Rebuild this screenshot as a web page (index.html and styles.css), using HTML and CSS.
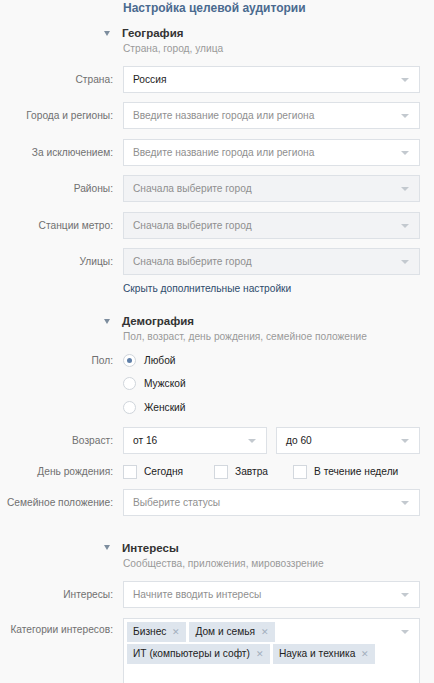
FILE: index.html
```html
<!DOCTYPE html>
<html lang="ru">
<head>
<meta charset="utf-8">
<link rel="stylesheet" href="styles.css">
</head>
<body>
<div class="page">
  <div class="title">Настройка целевой аудитории</div>

  <div class="section-head"><span class="tri"></span><span class="h">География</span></div>
  <div class="sub">Страна, город, улица</div>

  <div class="form">
    <div class="row"><div class="lbl">Страна:</div><div class="sel"><span class="val">Россия</span><span class="arr"></span></div></div>
    <div class="row"><div class="lbl">Города и регионы:</div><div class="sel"><span class="ph">Введите название города или региона</span><span class="arr"></span></div></div>
    <div class="row"><div class="lbl">За исключением:</div><div class="sel"><span class="ph">Введите название города или региона</span><span class="arr"></span></div></div>
    <div class="row"><div class="lbl">Районы:</div><div class="sel dis"><span class="ph">Сначала выберите город</span><span class="arr"></span></div></div>
    <div class="row"><div class="lbl">Станции метро:</div><div class="sel dis"><span class="ph">Сначала выберите город</span><span class="arr"></span></div></div>
    <div class="row"><div class="lbl">Улицы:</div><div class="sel dis"><span class="ph">Сначала выберите город</span><span class="arr"></span></div></div>
  </div>
  <div class="link">Скрыть дополнительные настройки</div>

  <div class="section-head s2"><span class="tri"></span><span class="h">Демография</span></div>
  <div class="sub">Пол, возраст, день рождения, семейное положение</div>

  <div class="radios">
    <div class="rrow"><div class="lbl">Пол:</div><span class="radio on"></span><span class="rt">Любой</span></div>
    <div class="rrow"><div class="lbl"></div><span class="radio"></span><span class="rt">Мужской</span></div>
    <div class="rrow"><div class="lbl"></div><span class="radio"></span><span class="rt">Женский</span></div>
  </div>

  <div class="row age"><div class="lbl">Возраст:</div>
    <div class="pair">
      <div class="sel"><span class="val">от 16</span><span class="arr"></span></div>
      <div class="sel"><span class="val">до 60</span><span class="arr"></span></div>
    </div>
  </div>
  <div class="crow"><div class="lbl">День рождения:</div>
    <div class="checks">
      <span class="chk c1"><span class="cb"></span><span class="ct">Сегодня</span></span>
      <span class="chk c2"><span class="cb"></span><span class="ct">Завтра</span></span>
      <span class="chk"><span class="cb"></span><span class="ct">В течение недели</span></span>
    </div>
  </div>
  <div class="row fam"><div class="lbl">Семейное положение:</div><div class="sel"><span class="ph">Выберите статусы</span><span class="arr"></span></div></div>

  <div class="section-head s3"><span class="tri"></span><span class="h">Интересы</span></div>
  <div class="sub">Сообщества, приложения, мировоззрение</div>

  <div class="row int"><div class="lbl">Интересы:</div><div class="sel"><span class="ph">Начните вводить интересы</span><span class="arr"></span></div></div>
  <div class="row cat"><div class="lbl">Категории интересов:</div>
    <div class="tagbox">
      <div class="tags">
        <span class="tag">Бизнес<span class="x">✕</span></span>
        <span class="tag">Дом и семья<span class="x">✕</span></span>
        <span class="tag">ИТ (компьютеры и софт)<span class="x">✕</span></span>
        <span class="tag">Наука и техника<span class="x">✕</span></span>
      </div>
      <span class="arr"></span>
    </div>
  </div>
</div>
</body>
</html>
```
FILE: styles.css
```css
html, body {
  margin: 0;
  padding: 0;
  background: #f9f9f9;
}
body {
  font-family: "Liberation Sans", Arial, sans-serif;
  font-size: 10.2px;
  color: #222;
}
.page {
  width: 434px;
  height: 683px;
  overflow: hidden;
}
.title {
  margin-left: 123px;
  height: 16px;
  line-height: 16px;
  font-size: 12px;
  font-weight: bold;
  color: #4a6a8f;
}
.section-head {
  display: flex;
  align-items: center;
  margin-top: 9px;
  height: 16px;
}
.section-head.s2 { margin-top: 17.5px; }
.section-head.s3 { margin-top: 24px; }
.tri {
  margin-left: 104px;
  width: 0;
  height: 0;
  border-left: 3px solid transparent;
  border-right: 3px solid transparent;
  border-top: 5px solid #7d8d9e;
}
.h {
  margin-left: 12px;
  font-size: 11.5px;
  font-weight: bold;
  color: #333;
}
.sub {
  margin-left: 123px;
  height: 14px;
  line-height: 14px;
  margin-top: 1px;
  color: #9a9a9a;
}
.form {
  margin-top: 10px;
  display: flex;
  flex-direction: column;
  gap: 9.4px;
}
.row {
  display: flex;
  align-items: center;
}
.lbl {
  width: 123px;
  flex: none;
  text-align: right;
  color: #707070;
  padding-right: 10px;
  box-sizing: border-box;
  white-space: nowrap;
}
.sel {
  box-sizing: border-box;
  width: 297px;
  height: 27px;
  background: #fff;
  border: 1px solid #dde1e6;
  display: flex;
  align-items: center;
  padding-left: 9px;
  position: relative;
}
.sel.dis {
  background: #f2f3f5;
}
.val { color: #222; }
.ph { color: #8f8f8f; }
.arr {
  position: absolute;
  right: 10px;
  top: 11px;
  width: 0;
  height: 0;
  border-left: 4px solid transparent;
  border-right: 4px solid transparent;
  border-top: 4px solid #c3c9cf;
}
.link {
  margin-left: 123px;
  margin-top: 6px;
  height: 15px;
  line-height: 15px;
  color: #2d4b6c;
}
.radios {
  margin-top: 4px;
  display: flex;
  flex-direction: column;
}
.rrow {
  display: flex;
  align-items: center;
  height: 23.5px;
}
.radio {
  box-sizing: border-box;
  width: 13px;
  height: 13px;
  border-radius: 50%;
  border: 1px solid #cfd5db;
  background: #fff;
  position: relative;
  flex: none;
}
.radio.on::after {
  content: "";
  position: absolute;
  left: 3px;
  top: 3px;
  width: 5px;
  height: 5px;
  border-radius: 50%;
  background: #5f7fa8;
}
.rt {
  margin-left: 8px;
  color: #222;
}
.age { margin-top: 8px; }
.pair {
  display: flex;
  gap: 9px;
}
.pair .sel { width: 144px; }
.crow {
  display: flex;
  align-items: center;
  height: 18px;
  margin-top: 9px;
}
.checks {
  display: flex;
  align-items: center;
}
.chk {
  display: flex;
  align-items: center;
}
.chk.c1 { width: 91px; }
.chk.c2 { width: 79px; }
.cb {
  box-sizing: border-box;
  width: 14px;
  height: 14px;
  border: 1px solid #d3d8de;
  background: #fff;
  flex: none;
}
.ct { margin-left: 7px; color: #222; }
.fam { margin-top: 8px; }
.int { margin-top: 10px; }
.cat { margin-top: 10px; align-items: flex-start; }
.cat .lbl { padding-top: 6px; }
.tagbox {
  box-sizing: border-box;
  width: 297px;
  height: 80px;
  background: #fff;
  border: 1px solid #dde1e6;
  position: relative;
  padding: 3px 0 0 3px;
}
.tags {
  display: flex;
  flex-wrap: wrap;
  gap: 2px 3px;
  width: 262px;
}
.tag {
  display: inline-flex;
  align-items: center;
  height: 20px;
  padding: 0 6px;
  background: #dee5ed;
  color: #222;
}
.x {
  margin-left: 6px;
  font-size: 9px;
  color: #a3afbd;
}
```
